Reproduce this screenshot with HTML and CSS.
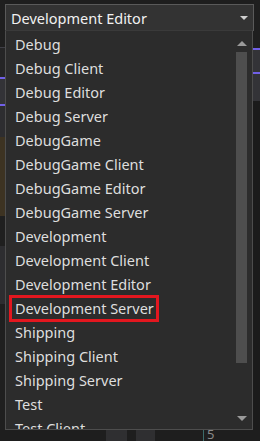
FILE: index.html
```html
<!doctype html>
<html>
<head>
    <title>Build Configuration</title>
    <link rel="stylesheet" href="styles.css">
</head>
<body>
    <div class="scene">
        <div class="backdrop">
            <div class="edge edge-left">
                <div class="band dark" style="height:48px"></div>
                <div class="band rule" style="height:1px"></div>
                <div class="band tab" style="height:30px"></div>
                <div class="band purple" style="height:2px"></div>
                <div class="band toolbar" style="height:26px"></div>
                <div class="band purple" style="height:2px"></div>
                <div class="band panel" style="height:31px"></div>
                <div class="band brown" style="height:82px"></div>
                <div class="band dark" style="height:30px"></div>
                <div class="band panel" style="height:60px"></div>
                <div class="band dark" style="height:129px"></div>
            </div>
            <div class="middle"></div>
            <div class="edge edge-right">
                <div class="band dark" style="height:49px"></div>
                <div class="band purple" style="height:2px"></div>
                <div class="band toolbar" style="height:23px"></div>
                <div class="band purple" style="height:2px"></div>
                <div class="band toolbar" style="height:28px"></div>
                <div class="band darker" style="height:337px"></div>
            </div>
        </div>
        <div class="footer-strip">
            <span class="block b1"></span>
            <span class="block b2"></span>
            <span class="line-no">5</span>
        </div>

        <div class="combo">
            <span class="combo-text">Development Editor</span>
            <span class="combo-arrow"></span>
        </div>

        <div class="dropdown">
            <ul class="items">
                <li class="item">Debug</li>
                <li class="item">Debug Client</li>
                <li class="item">Debug Editor</li>
                <li class="item">Debug Server</li>
                <li class="item">DebugGame</li>
                <li class="item">DebugGame Client</li>
                <li class="item">DebugGame Editor</li>
                <li class="item">DebugGame Server</li>
                <li class="item">Development</li>
                <li class="item">Development Client</li>
                <li class="item">Development Editor</li>
                <li class="item marked"><span class="mark">Development Server</span></li>
                <li class="item">Shipping</li>
                <li class="item">Shipping Client</li>
                <li class="item">Shipping Server</li>
                <li class="item">Test</li>
                <li class="item">Test Client</li>
            </ul>
            <div class="scrollbar">
                <span class="arrow up"></span>
                <div class="track"><div class="thumb"></div></div>
                <span class="arrow down"></span>
            </div>
        </div>
    </div>
</body>
</html>
```

FILE: styles.css
```css
html, body {
    margin: 0;
    padding: 0;
    background-color: #1e1e1e;
}
.scene {
    position: relative;
    width: 260px;
    height: 441px;
    overflow: hidden;
    font-family: "Noto Sans", "Open Sans", sans-serif;
}
.backdrop {
    display: flex;
    height: 430px;
}
.edge {
    display: flex;
    flex-direction: column;
}
.edge-left {
    width: 5px;
}
.edge-right {
    width: 7px;
}
.middle {
    flex: 1;
}
.band.dark { background-color: #1f1f1f; }
.band.darker { background-color: #1b1b1b; }
.band.rule { background-color: #3f3f46; }
.band.tab { background-color: #252526; }
.band.purple { background-color: #7160e8; }
.band.toolbar { background-color: #333337; }
.band.panel { background-color: #2d2d30; }
.band.brown { background-color: #3d3322; }

.footer-strip {
    display: flex;
    align-items: stretch;
    height: 11px;
    background-color: #1e1e1e;
}
.block {
    background-color: #2f2f31;
}
.b1 {
    margin-left: 106px;
    width: 21px;
}
.b2 {
    margin-left: 9px;
    width: 19px;
}
.line-no {
    margin-left: 48px;
    padding-left: 3px;
    border-left: 1px solid #3b6b6b;
    color: #8a8a8a;
    font-size: 13px;
    line-height: 9px;
}

/* combo box */
.combo {
    position: absolute;
    left: 5px;
    top: 4px;
    width: 247px;
    height: 25px;
    border: 1px solid #5a5a5a;
    background-color: #333333;
    display: flex;
    align-items: center;
    justify-content: space-between;
}
.combo-text {
    padding-left: 5px;
    color: #f1f1f1;
    font-size: 14.5px;
}
.combo-arrow {
    width: 0;
    height: 0;
    margin-right: 5px;
    border-left: 4px solid transparent;
    border-right: 4px solid transparent;
    border-top: 4px solid #cfcfcf;
}

/* drop list */
.dropdown {
    position: absolute;
    left: 5px;
    top: 30px;
    width: 246px;
    height: 398px;
    border: 1px solid #4d4d4d;
    border-top-color: #3a3a3a;
    background-color: #2c2c2c;
    display: flex;
    overflow: hidden;
}
.items {
    list-style: none;
    margin: 0;
    padding: 1px 0 0 0;
    flex: 1;
}
.item {
    height: 24px;
    display: flex;
    align-items: center;
    padding-left: 9px;
    color: #dedede;
    font-size: 14.5px;
    white-space: nowrap;
}
.mark {
    display: inline-block;
    border: 3px solid #e3171f;
    line-height: 21px;
    padding: 0 2px 0 3px;
    margin: -1px 0 -2px -6px;
}
.scrollbar {
    width: 11px;
    margin-right: 5px;
    display: flex;
    flex-direction: column;
    align-items: center;
}
.arrow {
    width: 0;
    height: 0;
    border-left: 5px solid transparent;
    border-right: 5px solid transparent;
}
.arrow.up {
    margin-top: 10px;
    border-bottom: 5px solid #9a9a9a;
}
.arrow.down {
    margin-bottom: 8px;
    border-top: 5px solid #9a9a9a;
}
.track {
    flex: 1;
    width: 11px;
    padding-top: 6px;
}
.thumb {
    width: 11px;
    height: 311px;
    background-color: #4e4e4e;
}
```
